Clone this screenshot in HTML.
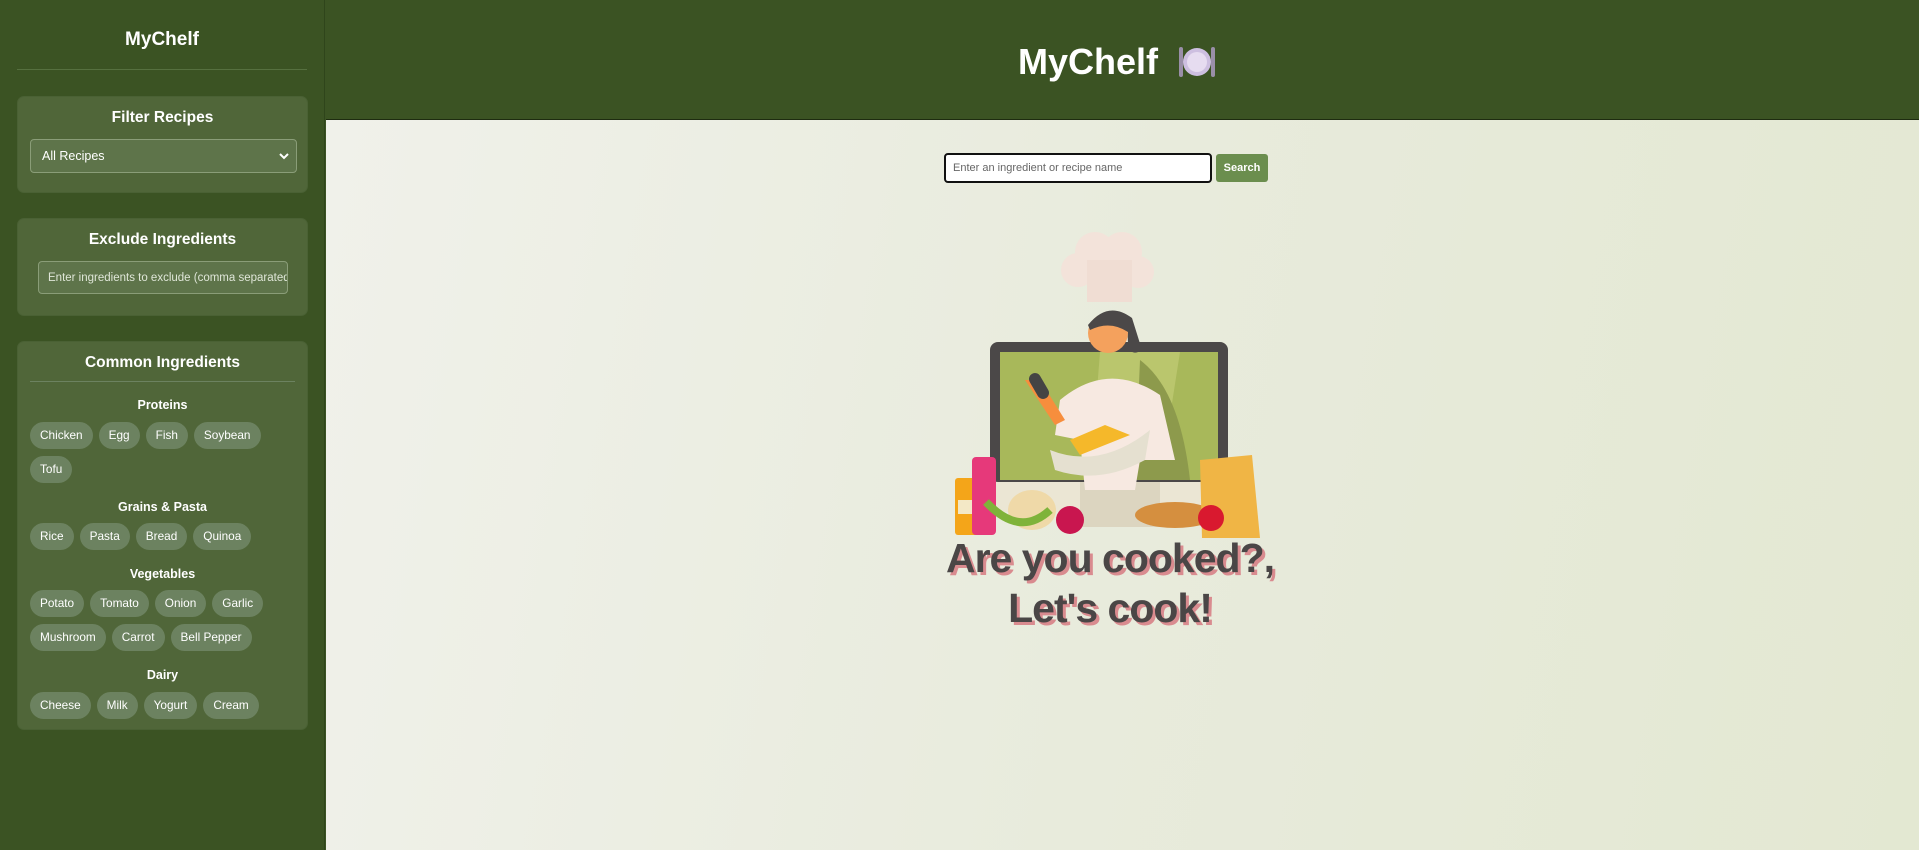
<!DOCTYPE html>
<html><head><meta charset="utf-8"><style>
*{box-sizing:border-box;margin:0;padding:0}
body{width:1919px;height:850px;overflow:hidden;font-family:"Liberation Sans",Arial,sans-serif;background:#3b5323;position:relative}
.side{position:absolute;left:0;top:0;width:325px;height:850px;background:#3b5323;border-right:1px solid #2f451b}
.side h1{position:absolute;top:29px;width:100%;text-align:center;color:#fff;font-size:19px}
.side .hr{position:absolute;left:17px;right:17px;top:69px;border-top:1px solid #56703f}
.card{position:absolute;left:17px;width:291px;background:#506639;border-radius:7px;border:1px solid #4a6134}
.card h2{text-align:center;color:#fff;font-size:15.5px;font-weight:bold}
.sel{position:absolute;left:12px;width:267px;height:34px;top:42px;background:#5e744a;border:1px solid #8a9d78;border-radius:4px;color:#fff;font-size:12.5px;padding:9px 11px}
.sel svg{position:absolute;right:6px;top:12px}
.inp{position:absolute;left:20px;width:250px;height:33px;top:42px;background:#5e744a;border:1px solid #8a9d78;border-radius:4px;color:#dfe6d8;font-size:11.5px;padding:10px 9px;white-space:nowrap;overflow:hidden}
.cat{text-align:center;color:#fff;font-size:12.5px;font-weight:bold;position:absolute;width:100%}
.chips{position:absolute;left:12px;width:270px}
.chip{display:inline-block;height:27px;line-height:27px;padding:0 10px;border-radius:14px;background:#6c8260;color:#fff;font-size:11.8px;margin:0 3px 7px 0;vertical-align:top}
.head{position:absolute;left:326px;top:0;right:0;height:120px;background:#3b5323;border-bottom:1px solid #1e2c10}
.head .t{position:absolute;left:692px;top:41px;color:#fff;font-size:36px;font-weight:bold}
.main{position:absolute;left:326px;top:120px;right:0;bottom:0;background:linear-gradient(100deg,#f0f1ea 0%,#e8ebdc 50%,#e3e8d2 100%)}
.search{position:absolute;left:944px;top:153px;width:268px;height:30px;background:#fff;border:2px solid #111;border-radius:4px;font-size:11px;color:#666;padding:7px 7px}
.btn{position:absolute;left:1216px;top:154px;width:52px;height:28px;background:#6b8e4e;border-radius:3px;color:#fff;font-size:11px;font-weight:bold;text-align:center;line-height:28px}
.big{position:absolute;left:900px;width:420px;text-align:center;white-space:nowrap;font-family:"Liberation Sans",sans-serif;font-weight:bold;font-size:41px;color:#4a4646;text-shadow:3px 3px 0 #d98b8f;letter-spacing:-1px}
</style></head><body>
<div class="side">
<h1>MyChelf</h1><div class="hr"></div>
<div class="card" style="top:96px;height:97px"><h2 style="margin-top:12px">Filter Recipes</h2>
<div class="sel">All Recipes<svg width="12" height="8" viewBox="0 0 12 8"><path d="M2 2l4 4 4-4" stroke="#fff" stroke-width="2" fill="none"/></svg></div></div>
<div class="card" style="top:218px;height:98px"><h2 style="margin-top:12px">Exclude Ingredients</h2>
<div class="inp">Enter ingredients to exclude (comma separated)</div></div>
<div class="card" style="top:341px;height:389px"><h2 style="margin-top:12px">Common Ingredients</h2>
<div style="position:absolute;left:12px;right:12px;top:39px;border-top:1px solid #6c8260"></div>
<div class="cat" style="top:56px">Proteins</div>
<div class="chips" style="top:80px"><span class="chip">Chicken</span><span class="chip" style="margin-left:3px">Egg</span><span class="chip" style="margin-left:3px">Fish</span><span class="chip" style="margin-left:3px">Soybean</span><br><span class="chip">Tofu</span></div>
<div class="cat" style="top:158px">Grains &amp; Pasta</div>
<div class="chips" style="top:181px"><span class="chip">Rice</span><span class="chip" style="margin-left:3px">Pasta</span><span class="chip" style="margin-left:3px">Bread</span><span class="chip" style="margin-left:3px">Quinoa</span></div>
<div class="cat" style="top:225px">Vegetables</div>
<div class="chips" style="top:248px"><span class="chip">Potato</span><span class="chip" style="margin-left:3px">Tomato</span><span class="chip" style="margin-left:3px">Onion</span><span class="chip" style="margin-left:3px">Garlic</span><br><span class="chip">Mushroom</span><span class="chip" style="margin-left:3px">Carrot</span><span class="chip" style="margin-left:3px">Bell Pepper</span></div>
<div class="cat" style="top:326px">Dairy</div>
<div class="chips" style="top:350px"><span class="chip">Cheese</span><span class="chip" style="margin-left:3px">Milk</span><span class="chip" style="margin-left:3px">Yogurt</span><span class="chip" style="margin-left:3px">Cream</span></div>
</div>
</div>
<div class="head"><div class="t">MyChelf</div>
<svg style="position:absolute;left:851px;top:45px" width="40" height="34" viewBox="0 0 40 34"><rect x="2" y="2" width="4" height="30" rx="2" fill="#9a8fa8"/><rect x="34" y="2" width="4" height="30" rx="2" fill="#9a8fa8"/><circle cx="20" cy="17" r="14" fill="#cdbfe0"/><circle cx="20" cy="17" r="10" fill="#e6dcf0"/></svg></div>
<div class="main"></div>
<div class="search">Enter an ingredient or recipe name</div>
<div class="btn">Search</div>
<svg style="position:absolute;left:930px;top:220px" width="360" height="320" viewBox="0 0 360 320">
<rect x="60" y="122" width="238" height="140" rx="8" fill="#4b4848"/>
<rect x="70" y="132" width="218" height="128" fill="#a8b85a"/>
<path d="M170 132 L250 132 L230 260 L160 260Z" fill="#c6cf7a" opacity=".6"/>
<path d="M210 140 Q250 170 260 260 L205 260 Z" fill="#8d9a4c"/>
<rect x="60" y="262" width="240" height="30" fill="#ebe6d4"/>
<rect x="150" y="262" width="80" height="45" fill="#dcd5c0"/>
<circle cx="148" cy="50" r="17" fill="#f3e3da"/><circle cx="165" cy="32" r="20" fill="#f3e3da"/><circle cx="192" cy="32" r="20" fill="#f3e3da"/><circle cx="208" cy="52" r="16" fill="#f3e3da"/>
<rect x="157" y="40" width="45" height="42" fill="#f0ddd3"/>
<circle cx="178" cy="113" r="20" fill="#f4a15d"/>
<path d="M158 105 Q178 80 202 98 L212 130 Q196 140 198 112 Q180 100 160 110 Z" fill="#4b4848"/>
<path d="M130 180 Q178 140 230 175 L245 240 L210 240 L205 270 L155 270 L150 220 L125 215 Z" fill="#f7e9e1"/>
<path d="M95 160 L125 205 L135 200 L110 160Z" fill="#f78e3d"/>
<rect x="103" y="152" width="12" height="28" rx="6" fill="#444" transform="rotate(-30 109 166)"/>
<path d="M120 230 Q170 250 220 210 L215 240 Q170 265 125 250Z" fill="#e5e0d0"/>
<path d="M140 220 L175 205 L200 215 L150 235Z" fill="#f5b82a"/>
<rect x="25" y="258" width="24" height="57" rx="3" fill="#f4a519"/>
<rect x="28" y="280" width="18" height="14" fill="#f3e8c6"/>
<rect x="42" y="237" width="24" height="78" rx="4" fill="#e6397a"/>
<ellipse cx="102" cy="290" rx="24" ry="20" fill="#efd9a8"/>
<circle cx="140" cy="300" r="14" fill="#c9164f"/>
<path d="M56 282 Q90 318 120 290" stroke="#7fb33a" stroke-width="8" fill="none"/>
<ellipse cx="245" cy="295" rx="40" ry="13" fill="#d58f3f"/>
<path d="M270 240 L322 235 L330 318 L272 318Z" fill="#f0b545"/>
<circle cx="281" cy="298" r="13" fill="#d9192f"/>
</svg>
<div class="big" style="top:535px">Are you cooked?,</div>
<div class="big" style="top:585px">Let's cook!</div>
</body></html>
